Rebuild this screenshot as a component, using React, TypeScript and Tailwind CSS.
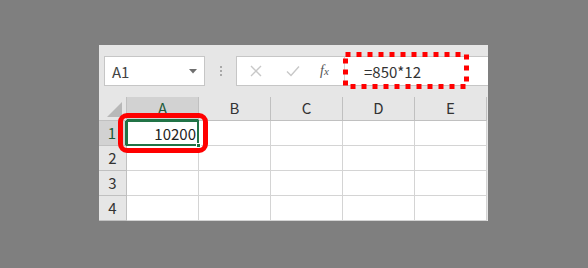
import React from 'react';

const cols = ['A', 'B', 'C', 'D', 'E'];
const rows = [1, 2, 3, 4];

const font = { fontFamily: '"Noto Sans CJK JP", "Noto Sans", sans-serif' };

export default function App() {
  return (
    <div className="w-[588px] h-[268px] bg-[#7f7f7f] pl-[99px] pt-[45px]" style={font}>
      <div className="relative w-[389px] h-[176px] bg-[#e6e6e6] pt-[11px]">
        {/* formula bar */}
        <div className="flex items-stretch h-[30px] ml-[5px]">
          <div className="w-[101px] bg-white border border-[#c6c6c6] flex items-center justify-between pl-[7px] pr-[7px]">
            <span className="text-[15px] text-[#444] leading-none">A1</span>
            <svg width="8" height="5" viewBox="0 0 8 5">
              <path d="M0 0 L8 0 L4 4.5 Z" fill="#6f6f6f" />
            </svg>
          </div>
          <div className="w-[31px] flex flex-col items-center justify-center gap-[2px]">
            <div className="w-[2px] h-[2px] bg-[#a8a8a8]" />
            <div className="w-[2px] h-[2px] bg-[#a8a8a8]" />
            <div className="w-[2px] h-[2px] bg-[#a8a8a8]" />
          </div>
          <div className="flex-1 flex bg-white border-y border-l border-[#c6c6c6]">
            <div className="w-[107px] flex items-center">
              <svg className="ml-[13px]" width="12" height="12" viewBox="0 0 12 12">
                <path d="M1 1 L11 11 M11 1 L1 11" stroke="#c8c8c8" strokeWidth="1.4" fill="none" />
              </svg>
              <svg className="ml-[24px]" width="14" height="12" viewBox="0 0 14 12">
                <path d="M1 6.5 L5 10.5 L13 1.5" stroke="#c8c8c8" strokeWidth="1.4" fill="none" />
              </svg>
              <span
                className="ml-[20px] text-[14px] italic text-[#555] leading-none"
                style={{ fontFamily: '"Liberation Serif", serif' }}
              >
                f<span className="text-[11px]">x</span>
              </span>
            </div>
            <div className="flex-1 border-l border-[#d4d4d4] flex items-center pl-[19px]">
              <span className="text-[15px] text-[#333] leading-none">=850*12</span>
            </div>
          </div>
        </div>

        {/* grid */}
        <div className="grid grid-cols-[28px_repeat(5,72px)] mt-[11px]">
          <div className="h-[24px] bg-[#e6e6e6] border-r border-b border-[#c0c0c0] flex items-end justify-end pr-[4px] pb-[3px]">
            <svg width="15" height="15" viewBox="0 0 15 15">
              <path d="M15 0 L15 15 L0 15 Z" fill="#b8b8b8" />
            </svg>
          </div>
          {cols.map((c, i) => (
            <div
              key={c}
              className={
                i === 0
                  ? 'h-[24px] bg-[#d2d2d2] border-r border-b-2 border-r-[#c0c0c0] border-b-[#217346] flex items-center justify-center text-[15px] text-[#1e5a3a]'
                  : 'h-[24px] bg-[#e6e6e6] border-r border-b border-[#c0c0c0] flex items-center justify-center text-[15px] text-[#333]'
              }
            >
              {c}
            </div>
          ))}
          {rows.map((r) => (
            <React.Fragment key={r}>
              <div
                className={
                  r === 1
                    ? 'h-[25px] bg-[#d2d2d2] border-r-2 border-b border-r-[#217346] border-b-[#c0c0c0] flex items-center justify-center text-[15px] text-[#1e5a3a]'
                    : 'h-[25px] bg-[#e6e6e6] border-r border-b border-[#c0c0c0] flex items-center justify-center text-[15px] text-[#333]'
                }
              >
                {r}
              </div>
              {cols.map((c, i) =>
                r === 1 && i === 0 ? (
                  <div key={c} className="relative h-[25px] bg-white border-r border-b border-[#d4d4d4]">
                    <div className="absolute -left-px -top-px right-[-1px] bottom-[-1px] border-2 border-[#217346] flex items-center justify-end pr-[1px]">
                      <span className="text-[15px] text-[#222] leading-none">10200</span>
                    </div>
                    <div className="absolute right-[-3px] bottom-[-3px] w-[5px] h-[5px] bg-[#217346] border border-white" />
                  </div>
                ) : (
                  <div key={c} className="h-[25px] bg-white border-r border-b border-[#d4d4d4]" />
                )
              )}
            </React.Fragment>
          ))}
        </div>

        {/* annotations */}
        <div className="absolute left-[19px] top-[68px] w-[90px] h-[40px] border-[5px] border-[#ff0000] rounded-[9px]" />
        <svg className="absolute left-[244px] top-[7px]" width="126" height="37" viewBox="0 0 126 37">
          <rect
            x="2.5"
            y="2.5"
            width="121"
            height="32"
            fill="none"
            stroke="#ff0000"
            strokeWidth="5"
            strokeDasharray="5 6"
          />
        </svg>
      </div>
    </div>
  );
}
